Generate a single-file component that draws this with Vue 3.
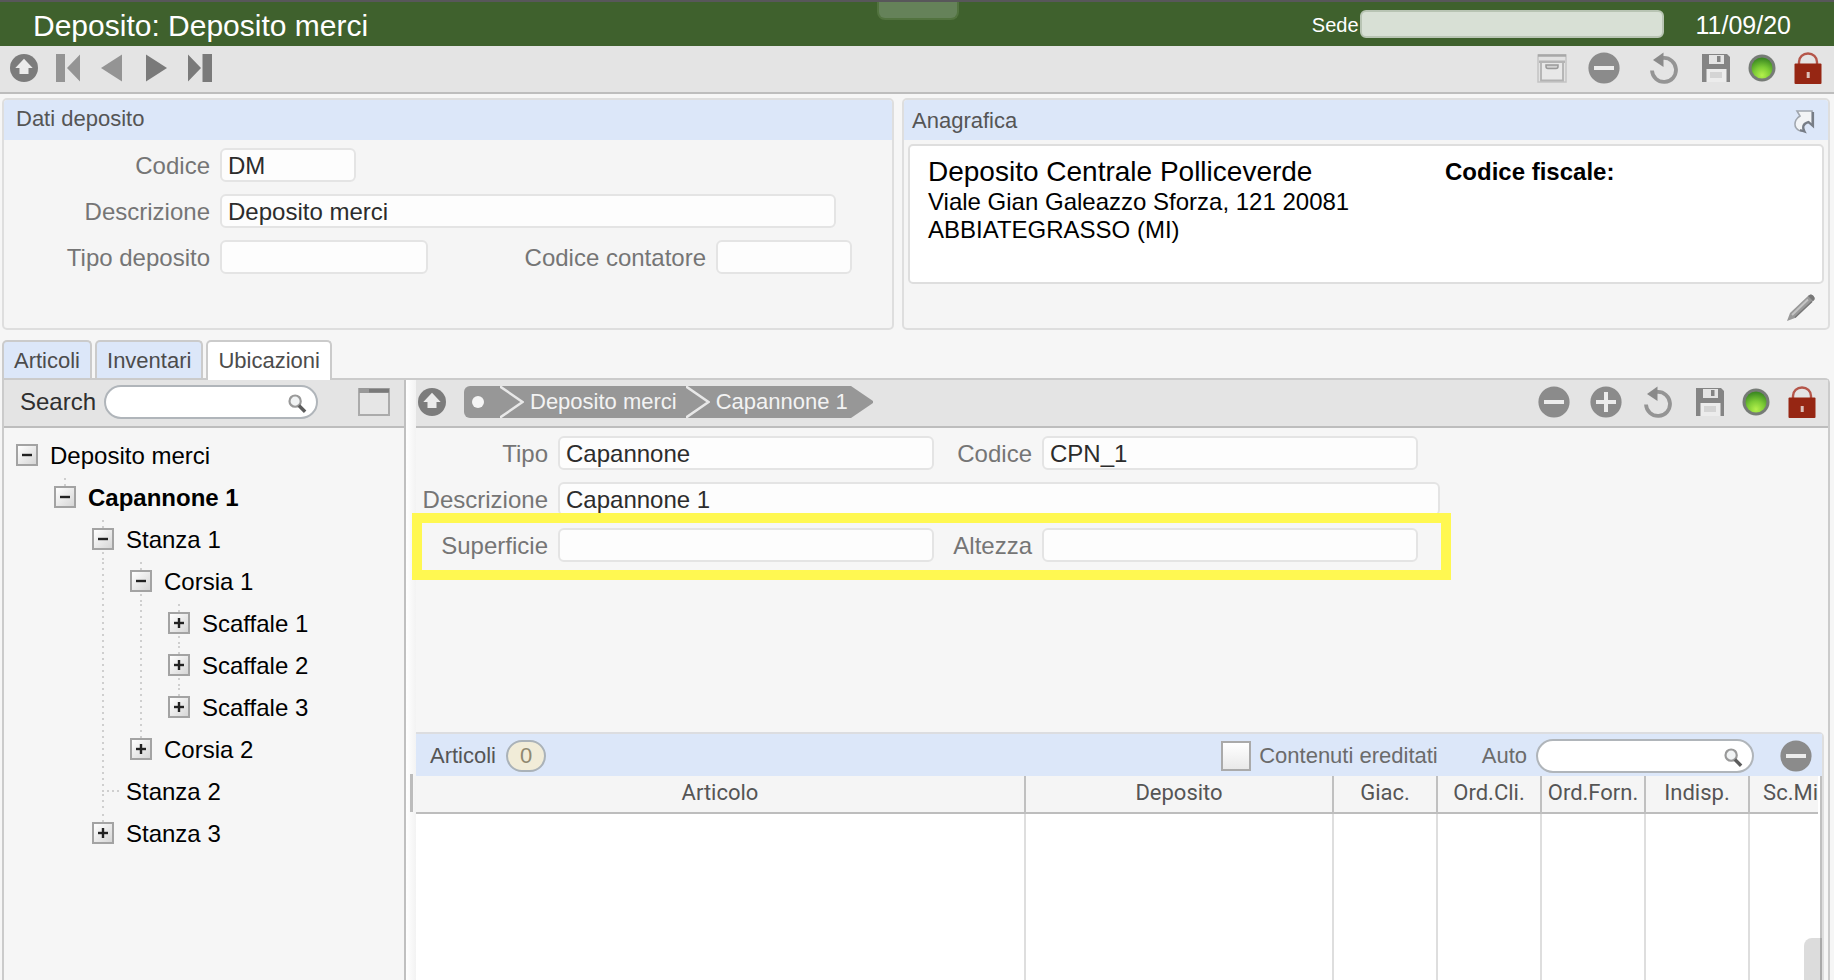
<script setup>
import { ref } from 'vue'

const icons = {
  up: '<circle cx="16" cy="16" r="14" fill="#7c7c7c"/><path d="M16 6.7 24.7 16H20.5V22H11.5V16H7.3Z" fill="#ebebeb"/>',
  first: '<path d="M4 2h9v28H4zM28 2.5v27L15 16z" fill="#949494"/>',
  prev: '<path d="M26 2.5v27L5 16z" fill="#949494"/>',
  next: '<path d="M6 2.5v27L27 16z" fill="#7a7a7a"/>',
  last: '<path d="M4 2.5v27L17 16zM18.5 2H28v28h-9.500z" fill="#7a7a7a"/>',
  archive:
    '<rect x="2" y="3" width="28" height="27" fill="#e2e2e2" stroke="#c4c4c4" stroke-width="1.500"/><path d="M2 3.500H30" stroke="#a8a8a8" stroke-width="2.500"/><path d="M3 8.500H29V11H3Z" fill="#b4b4b4"/><path d="M5 11V28.500H27V11" fill="#e8e8e8" stroke="#b2b2b2" stroke-width="1.800"/><path d="M10 13V14.500Q10 16.500 12 16.500H20Q22 16.500 22 14.500V13Z" fill="#d2d2d2" stroke="#999" stroke-width="1.500"/>',
  minus: '<circle cx="16" cy="16" r="15.600" fill="#8b8b8b"/><path d="M6 14H26V18H6Z" fill="#ececec"/>',
  plus: '<circle cx="16" cy="16" r="15.600" fill="#8b8b8b"/><path d="M6 14h8V6h4v8h8v4h-8v8h-4v-8H6z" fill="#ececec"/>',
  undo: '<path d="M4 18.500A12 12 0 1 0 15 6" fill="none" stroke="#949494" stroke-width="3.800"/><path d="M5 8 15.500 .5V15Z" fill="#8a8a8a"/>',
  save: '<path d="M2 2H27L30 5V30H2Z" fill="#848484"/><path d="M9 3H24V12H9Z" fill="#e4e4e4"/><path d="M17 4H20.500V10H17Z" fill="#848484"/><path d="M6.500 17H26.500V30H6.500Z" fill="#ececec"/><path d="M10 20H22V26H10Z" fill="#d4d4d4"/>',
  led: '<defs><radialGradient id="ledGlow" cx=".5" cy=".85" r=".8"><stop offset="0" stop-color="#b4f04c"/><stop offset=".5" stop-color="#7ccb35"/><stop offset="1" stop-color="#3d8a22"/></radialGradient></defs><circle cx="16" cy="16" r="13.500" fill="#767b76"/><circle cx="16" cy="16" r="10.500" fill="url(#ledGlow)"/>',
  lock: '<path d="M7 12.500V10C7 5 11 1.500 16 1.500S25 5 25 10V12.500" fill="none" stroke="#b5564a" stroke-width="2.400"/><rect x="2.500" y="11.500" width="27" height="20.500" rx="1" fill="#962613"/><rect x="14.700" y="20" width="3" height="6" fill="#dcc0ba"/>',
  link: '<path d="M9 6H24V20L20 17C15 18 14 21 16 26C9 27 5 21 8 15Q9 13 12 11Z" fill="#f2f4f6" stroke="#a0a6ae" stroke-width="1.600"/><path d="M25 7V21L20.500 17C15 19 14 22 16.500 26.500L12 25" fill="none" stroke="#777d86" stroke-width="2.200"/>',
  pencil:
    '<path d="M3 29 6 21 24 4Q27 1 29.500 4T29 9L11 26Z" fill="#999"/><path d="M8 23 24 7.500" stroke="#c4c4c4" stroke-width="2"/><path d="M11 25.500 28 9.500" stroke="#777" stroke-width="1.500"/><path d="M24 4Q27 1 29.500 4T29 9Z" fill="#787878"/>',
  lens: '<circle cx="13" cy="13" r="9" fill="#f1f3f4" stroke="#999" stroke-width="3.500"/><path d="M19 20 29 30" stroke="#5c5c5c" stroke-width="5.500"/>',
  window:
    '<rect x="1" y="3" width="30" height="26" fill="#e6e6e6" stroke="#ababab" stroke-width="2"/><path d="M1 2H31V7H1Z" fill="#999"/><path d="M11 3H31V6.500H11Z" fill="#7a7a7a"/>',
}

const navButtons = [
  { icon: 'up', label: 'Torna su' },
  { icon: 'first', label: 'Primo' },
  { icon: 'prev', label: 'Precedente' },
  { icon: 'next', label: 'Successivo' },
  { icon: 'last', label: 'Ultimo' },
]
const formActions = [
  { icon: 'archive', label: 'Archivia' },
  { icon: 'minus', label: 'Elimina' },
  { icon: 'undo', label: 'Annulla', spaced: true },
  { icon: 'save', label: 'Salva' },
  { icon: 'led', label: 'Stato', tight: true },
  { icon: 'lock', label: 'Blocca', tight: true },
]
const placeActions = [
  { icon: 'minus', label: 'Elimina ubicazione' },
  { icon: 'plus', label: 'Aggiungi ubicazione' },
  { icon: 'undo', label: 'Annulla modifiche' },
  { icon: 'save', label: 'Salva ubicazione' },
  { icon: 'led', label: 'Stato ubicazione', tight: true },
  { icon: 'lock', label: 'Blocca ubicazione', tight: true },
]

const tabs = ['Articoli', 'Inventari', 'Ubicazioni']
const activeTab = ref('Ubicazioni')

// guides: one flag per ancestor level, true where the branch line continues
const tree = [
  { text: 'Deposito merci', sign: '-', guides: [], above: false, below: false },
  { text: 'Capannone 1', sign: '-', guides: [false], above: true, below: false, current: true },
  { text: 'Stanza 1', sign: '-', guides: [false, false], above: true, below: true },
  { text: 'Corsia 1', sign: '-', guides: [false, false, true], above: true, below: true },
  { text: 'Scaffale 1', sign: '+', guides: [false, false, true, true], above: true, below: true },
  { text: 'Scaffale 2', sign: '+', guides: [false, false, true, true], above: true, below: true },
  { text: 'Scaffale 3', sign: '+', guides: [false, false, true, true], above: true, below: false },
  { text: 'Corsia 2', sign: '+', guides: [false, false, true], above: true, below: false },
  { text: 'Stanza 2', sign: '', guides: [false, false], above: true, below: true },
  { text: 'Stanza 3', sign: '+', guides: [false, false], above: true, below: false },
]

const columns = [
  { title: 'Articolo', size: 'col-main' },
  { title: 'Deposito', size: 'col-wide' },
  { title: 'Giac.', size: 'col-num' },
  { title: 'Ord.Cli.', size: 'col-num' },
  { title: 'Ord.Forn.', size: 'col-num' },
  { title: 'Indisp.', size: 'col-num' },
  { title: 'Sc.Mi', size: 'col-last' },
]

const sede = ref('')
const codice = ref('DM')
const descrizione = ref('Deposito merci')
const tipoDeposito = ref('')
const codiceContatore = ref('')
const treeSearch = ref('')
const placeType = ref('Capannone')
const placeCode = ref('CPN_1')
const placeName = ref('Capannone 1')
const superficie = ref('')
const altezza = ref('')
const inherited = ref(false)
const auto = ref('')
</script>

<template>
  <div class="page">
    <header class="titlebar">
      <span class="handle"></span>
      <h1>Deposito: Deposito merci</h1>
      <label class="sede-label" for="sede">Sede</label>
      <input id="sede" v-model="sede" class="sede" type="text" />
      <time class="date" datetime="2020-09-11">11/09/20</time>
    </header>

    <div class="toolbar main-toolbar">
      <div class="nav-buttons">
        <button v-for="b in navButtons" :key="b.icon" class="icon-btn" type="button" :aria-label="b.label">
          <svg viewBox="0 0 32 32" v-html="icons[b.icon]"></svg>
        </button>
      </div>
      <div class="actions">
        <button
          v-for="b in formActions"
          :key="b.icon"
          class="icon-btn"
          :class="{ tight: b.tight, spaced: b.spaced }"
          type="button"
          :aria-label="b.label"
        >
          <svg viewBox="0 0 32 32" v-html="icons[b.icon]"></svg>
        </button>
      </div>
    </div>

    <div class="panels">
      <section class="panel">
        <h2 class="panel-head data-head">Dati deposito</h2>
        <div class="data-form">
          <div class="row">
            <label for="codice">Codice</label>
            <input id="codice" v-model="codice" class="field w-code" type="text" />
          </div>
          <div class="row">
            <label for="descrizione">Descrizione</label>
            <input id="descrizione" v-model="descrizione" class="field w-desc" type="text" />
          </div>
          <div class="row">
            <label for="tipo-deposito">Tipo deposito</label>
            <input id="tipo-deposito" v-model="tipoDeposito" class="field w-type" type="text" />
            <label class="counter" for="contatore">Codice contatore</label>
            <input id="contatore" v-model="codiceContatore" class="field w-code" type="text" />
          </div>
        </div>
      </section>

      <section class="panel">
        <div class="panel-head registry-head">
          <h2>Anagrafica</h2>
          <button class="icon-btn" type="button" aria-label="Apri anagrafica">
            <svg viewBox="0 0 32 32" v-html="icons.link"></svg>
          </button>
        </div>
        <div class="card">
          <div>
            <p class="card-name">Deposito Centrale Polliceverde</p>
            <p class="card-line">Viale Gian Galeazzo Sforza, 121 20081</p>
            <p class="card-line">ABBIATEGRASSO (MI)</p>
          </div>
          <p class="card-tax">Codice fiscale:</p>
        </div>
        <div class="card-foot">
          <button class="icon-btn" type="button" aria-label="Modifica">
            <svg viewBox="0 0 32 32" v-html="icons.pencil"></svg>
          </button>
        </div>
      </section>
    </div>

    <div class="tabs" role="tablist">
      <button
        v-for="t in tabs"
        :key="t"
        class="tab"
        :class="{ active: t === activeTab }"
        role="tab"
        type="button"
        :aria-selected="t === activeTab"
        @click="activeTab = t"
      >{{ t }}</button>
    </div>

    <main class="pane">
      <aside class="tree-pane">
        <div class="toolbar tree-toolbar">
          <label for="tree-search">Search</label>
          <div class="search tree-search">
            <input id="tree-search" v-model="treeSearch" type="text" />
            <svg viewBox="0 0 32 32" v-html="icons.lens"></svg>
          </div>
          <button class="icon-btn" type="button" aria-label="Finestra">
            <svg viewBox="0 0 32 32" v-html="icons.window"></svg>
          </button>
        </div>
        <ul class="tree">
          <li v-for="n in tree" :key="n.text">
            <span v-for="(g, i) in n.guides" :key="i" class="guide" :class="{ line: g }"></span>
            <span class="node" :class="{ leaf: !n.sign }">
              <span class="stub" :class="{ line: n.above }"></span>
              <button v-if="n.sign" type="button" class="toggle" :aria-label="n.sign === '+' ? 'Espandi' : 'Comprimi'">
                <svg viewBox="0 0 22 22">
                  <path d="M6 11H16" />
                  <path v-if="n.sign === '+'" d="M11 6V16" />
                </svg>
              </button>
              <span v-else class="elbow"></span>
              <span class="stub" :class="{ line: n.below }"></span>
            </span>
            <a href="#" :class="{ current: n.current }">{{ n.text }}</a>
          </li>
        </ul>
      </aside>

      <div class="splitter"><span></span></div>

      <div class="detail">
        <div class="toolbar detail-toolbar">
          <button class="icon-btn" type="button" aria-label="Livello superiore">
            <svg viewBox="0 0 32 32" v-html="icons.up"></svg>
          </button>
          <nav class="crumbs" aria-label="Percorso">
            <a href="#" class="crumb-root" aria-label="Inizio"><span></span></a>
            <svg class="chevron" viewBox="0 0 24 32"><path class="fill" d="M0 0H24V32H0Z" /><path class="edge" d="M-2 -1 22.500 16 -2 33" /></svg>
            <a href="#">Deposito merci</a>
            <svg class="chevron" viewBox="0 0 24 32"><path class="fill" d="M0 0H24V32H0Z" /><path class="edge" d="M-2 -1 22.500 16 -2 33" /></svg>
            <a href="#" class="crumb-last">Capannone 1</a>
            <svg class="chevron" viewBox="0 0 24 32"><path class="fill" d="M0 0 22 15V17L0 32Z" /></svg>
          </nav>
          <div class="actions">
            <button
              v-for="b in placeActions"
              :key="b.icon"
              class="icon-btn"
              :class="{ tight: b.tight }"
              type="button"
              :aria-label="b.label"
            >
              <svg viewBox="0 0 32 32" v-html="icons[b.icon]"></svg>
            </button>
          </div>
        </div>

        <div class="place-form">
          <div class="row">
            <label for="tipo">Tipo</label>
            <input id="tipo" v-model="placeType" class="field w-half" type="text" />
            <label class="second" for="place-code">Codice</label>
            <input id="place-code" v-model="placeCode" class="field w-half" type="text" />
          </div>
          <div class="row">
            <label for="place-name">Descrizione</label>
            <input id="place-name" v-model="placeName" class="field w-full" type="text" />
          </div>
          <div class="row marked">
            <label for="superficie">Superficie</label>
            <input id="superficie" v-model="superficie" class="field w-half" type="text" />
            <label class="second" for="altezza">Altezza</label>
            <input id="altezza" v-model="altezza" class="field w-half" type="text" />
          </div>
        </div>

        <section class="articles">
          <div class="articles-head">
            <h2>Articoli</h2>
            <span class="badge">0</span>
            <input id="inherited" v-model="inherited" class="check" type="checkbox" />
            <label for="inherited">Contenuti ereditati</label>
            <label class="auto-label" for="auto">Auto</label>
            <div class="search auto-search">
              <input id="auto" v-model="auto" type="text" />
              <svg viewBox="0 0 32 32" v-html="icons.lens"></svg>
            </div>
            <button class="icon-btn" type="button" aria-label="Rimuovi articolo">
              <svg viewBox="0 0 32 32" v-html="icons.minus"></svg>
            </button>
          </div>
          <div class="grid-frame">
            <table>
              <colgroup>
                <col v-for="c in columns" :key="c.title" :class="c.size" />
              </colgroup>
              <thead>
                <tr>
                  <th v-for="c in columns" :key="c.title" scope="col">{{ c.title }}</th>
                </tr>
              </thead>
              <tbody>
                <tr>
                  <td v-for="c in columns" :key="c.title"></td>
                </tr>
              </tbody>
            </table>
          </div>
          <span class="corner"></span>
        </section>
      </div>
    </main>
  </div>
</template>

<style>
body {
  background: #f5f5f5;
}
</style>

<style scoped>
.page,
.page * {
  box-sizing: border-box;
}
.page {
  display: flex;
  flex-direction: column;
  height: 100vh;
  overflow: hidden;
  background: #f6f6f6;
  color: #555;
  font-family: "Liberation Sans", Arial, sans-serif;
  font-size: 22px;
}
h1,
h2,
p,
ul {
  margin: 0;
  padding: 0;
  font-weight: 400;
}
h2 {
  font-size: 22px;
}
a {
  text-decoration: none;
}
input,
button {
  font-family: inherit;
}
.titlebar {
  position: relative;
  display: flex;
  align-items: center;
  flex: none;
  height: 46px;
  padding: 0 43px 0 33px;
  border-top: 2px solid #58575a;
  background: #3f612d;
  color: #fff;
}
.handle {
  position: absolute;
  top: 0;
  left: 50%;
  width: 82px;
  height: 18px;
  margin-left: -40px;
  border: 2px solid #52733f;
  border-top: 0;
  border-radius: 0 0 8px 8px;
  background: #658259;
}
h1 {
  margin-right: auto;
  padding-top: 3px;
  font-size: 30px;
}
.sede-label {
  padding-top: 2px;
  font-size: 20px;
}
.sede {
  width: 304px;
  height: 28px;
  margin-left: 1px;
  padding: 0 6px;
  border: 2px solid #b8c4b3;
  border-radius: 6px;
  background: #d8e0d5;
  font-size: 20px;
}
.date {
  margin-left: 32px;
  padding-top: 2px;
  font-size: 25px;
}
.toolbar {
  display: flex;
  align-items: center;
  flex: none;
  height: 48px;
  padding-bottom: 2px;
  border-bottom: 2px solid #bdbdbd;
  background: #e4e4e4;
}
.main-toolbar {
  justify-content: space-between;
  padding-right: 10px;
  padding-left: 8px;
}
.nav-buttons {
  display: flex;
  gap: 12px;
}
.actions {
  display: flex;
  margin-left: auto;
}
.actions .icon-btn {
  margin-left: 20px;
}
.actions .tight {
  margin-left: 14px;
}
.actions .spaced {
  margin-left: 28px;
}
.icon-btn {
  flex: none;
  width: 32px;
  height: 32px;
  padding: 0;
  border: 0;
  background: none;
}
.icon-btn svg {
  display: block;
  width: 100%;
  height: 100%;
}
.panels {
  display: grid;
  grid-template-columns: 892fr 928fr;
  gap: 8px;
  flex: none;
  padding: 4px 4px 0 2px;
}
.panel {
  min-height: 232px;
  border: 2px solid #dedede;
  border-radius: 5px;
  background: #f5f5f5;
  overflow: hidden;
}
.panel-head {
  display: flex;
  align-items: center;
  height: 40px;
  background: #dce7f9;
}
.data-head {
  padding: 0 12px 2px;
}
.registry-head {
  justify-content: space-between;
  padding: 2px 8px 0;
}
.data-form {
  display: flex;
  flex-direction: column;
  gap: 12px;
  padding-top: 8px;
}
.row {
  display: flex;
  align-items: center;
  gap: 10px;
}
.row label {
  height: 34px;
  color: #757575;
  font-size: 24px;
  line-height: 36px;
  text-align: right;
  white-space: nowrap;
}
.data-form .row label {
  width: 206px;
}
.data-form .row .counter {
  width: 268px;
}
.field {
  height: 34px;
  padding: 2px 6px 0;
  border: 2px solid #e4e4e4;
  border-radius: 6px;
  background: #fdfdfd;
  color: #2c2c2c;
  font-size: 24px;
}
.w-code {
  width: 136px;
}
.w-desc {
  width: 616px;
}
.w-type {
  width: 208px;
}
.w-half {
  width: 376px;
}
.w-full {
  width: 882px;
}
.card {
  display: grid;
  grid-template-columns: 517fr 363fr;
  height: 140px;
  margin: 4px 4px 0;
  padding: 10px 14px 10px 18px;
  border: 2px solid #dedede;
  border-radius: 5px;
  background: #fff;
  color: #000;
  font-size: 24px;
  line-height: 28px;
}
.card-name {
  font-size: 28px;
  line-height: 32px;
}
.card-tax {
  font-weight: 700;
  line-height: 32px;
}
.card-foot {
  display: flex;
  justify-content: flex-end;
  padding: 8px 12px 0;
}
.tabs {
  position: relative;
  z-index: 1;
  display: flex;
  flex: none;
  gap: 3px;
  height: 40px;
  margin: 10px 0 -2px 2px;
}
.tab {
  height: 38px;
  padding: 2px 10px 0;
  border: 2px solid #cbcbcb;
  border-bottom: 0;
  border-radius: 5px 5px 0 0;
  background: #dce7f9;
  color: #4c4c4c;
  font-size: 22px;
}
.tab.active {
  height: 40px;
  padding-bottom: 2px;
  background: #fff;
}
.pane {
  display: flex;
  flex: 1;
  min-height: 0;
  margin: 0 4px 0 2px;
  border: 2px solid #cbcbcb;
  border-bottom: 0;
  border-radius: 0 5px 0 0;
}
.tree-pane {
  flex: none;
  width: 402px;
  border-right: 2px solid #c0c0c0;
}
.tree-toolbar {
  padding-right: 14px;
  padding-left: 16px;
  color: #2f2f2f;
  font-size: 24px;
}
.search {
  display: flex;
  align-items: center;
  height: 34px;
  padding: 2px 9px 0 14px;
  border: 2px solid #b0b5ba;
  border-radius: 17px;
  background: #fff;
}
.search input {
  flex: 1;
  min-width: 0;
  padding: 0;
  border: 0;
  background: none;
  font-size: 22px;
}
.search svg {
  flex: none;
  width: 20px;
  height: 20px;
}
.tree-search {
  width: 214px;
  margin: 0 auto 0 8px;
}
.tree {
  padding: 6px 0 0 12px;
  list-style: none;
}
.tree li {
  display: flex;
  align-items: center;
  height: 42px;
  font-size: 24px;
}
.guide {
  width: 38px;
  height: 42px;
}
.line {
  background: repeating-linear-gradient(#cfcfcf 0 2px, transparent 2px 6px) 10px 2px / 2px 100% no-repeat;
}
.node {
  display: grid;
  grid-template-rows: 1fr 22px 1fr;
  width: 22px;
  height: 42px;
  margin-right: 12px;
}
.node.leaf {
  grid-template-rows: 1fr 2px 1fr;
}
.elbow {
  width: 19px;
  margin-left: 10px;
  background: repeating-linear-gradient(90deg, #cfcfcf 0 2px, transparent 2px 5px);
}
.toggle {
  width: 22px;
  height: 22px;
  padding: 0;
  border: 2px solid #a3a3a3;
  background: linear-gradient(135deg, #fff, #d6d6d6);
}
.toggle svg {
  display: block;
  width: 22px;
  height: 22px;
  margin: -2px;
  stroke: #222;
  stroke-width: 2.400;
}
.tree a {
  padding-top: 2px;
  color: #000;
  white-space: nowrap;
}
.tree .current {
  font-weight: 700;
}
.splitter {
  display: flex;
  justify-content: center;
  flex: none;
  width: 10px;
  padding-top: 394px;
  background: linear-gradient(90deg, #fff, #f3f3f3);
}
.splitter span {
  width: 3px;
  height: 38px;
  background: #bcbcbc;
}
.detail {
  display: flex;
  flex: 1;
  flex-direction: column;
  min-width: 0;
}
.detail-toolbar {
  padding-right: 10px;
}
.crumbs {
  display: flex;
  height: 32px;
  margin-left: 16px;
  border-radius: 6px 0 0 6px;
  overflow: hidden;
}
.crumbs a {
  padding: 0 9px 0 6px;
  background: #979797;
  color: #f3f3f3;
  line-height: 32px;
  white-space: nowrap;
}
.crumbs .crumb-last {
  padding-right: 3px;
}
.crumbs .crumb-root {
  display: flex;
  align-items: center;
  width: 36px;
  padding: 0 8px;
}
.crumb-root span {
  width: 12px;
  height: 12px;
  border-radius: 50%;
  background: #f5f5f5;
}
.chevron {
  width: 24px;
  height: 32px;
}
.chevron .fill {
  fill: #979797;
}
.chevron .edge {
  fill: none;
  stroke: #e8e8e8;
  stroke-width: 2.500;
}
.place-form {
  display: flex;
  flex: none;
  flex-direction: column;
  gap: 12px;
  min-height: 304px;
  padding-top: 8px;
}
.place-form label {
  width: 132px;
}
.place-form .second {
  width: 88px;
}
.marked {
  position: relative;
  width: 1002px;
}
.marked::after {
  position: absolute;
  inset: -15px -33px -18px -4px;
  border: 10px solid #fff851;
  content: "";
  pointer-events: none;
}
.articles {
  position: relative;
  display: flex;
  flex: 1;
  flex-direction: column;
  min-height: 0;
  margin-right: 4px;
  border-top: 2px solid #dcdde0;
  border-right: 2px solid #dedede;
  border-radius: 0 5px 0 0;
}
.articles-head {
  display: flex;
  align-items: center;
  flex: none;
  height: 42px;
  padding: 2px 10px 0 14px;
  background: #dce7f9;
}
.badge {
  width: 40px;
  height: 32px;
  margin: 0 auto 0 10px;
  border: 2px solid #aab2b8;
  border-radius: 16px;
  background: #f1ecd8;
  color: #8f8870;
  line-height: 28px;
  text-align: center;
}
.articles-head label {
  color: #6b6b6b;
}
.check {
  width: 30px;
  height: 30px;
  margin: 0 8px 0 0;
  border: 2px solid #aaa;
  appearance: none;
  background: linear-gradient(#fff, #e9e9e9);
}
.check:checked {
  background: #8b8b8b;
}
.articles-head .auto-label {
  margin-left: 44px;
}
.auto-search {
  width: 218px;
  margin: 0 26px 0 9px;
}
.grid-frame {
  display: grid;
  flex: 1;
  min-height: 0;
  padding-right: 2px;
  border-right: 2px solid #c0c0c0;
  background: #fff;
}
table {
  width: 100%;
  border-spacing: 0;
  table-layout: fixed;
}
.col-wide {
  width: 308px;
}
.col-num {
  width: 104px;
}
.col-last {
  width: 68px;
}
th {
  height: 38px;
  padding: 0 0 4px;
  border-right: 2px solid #c0c0c0;
  border-bottom: 2px solid #bdbdbd;
  background: #f5f5f5;
  font-family: Roboto, "Liberation Sans", sans-serif;
  font-size: 22px;
  font-weight: 400;
}
td {
  padding: 0;
  border-right: 2px solid #dedede;
}
th:last-child,
td:last-child {
  border-right: 0;
  text-align: right;
}
.corner {
  position: absolute;
  right: 0;
  bottom: 0;
  width: 18px;
  height: 42px;
  border-right: 2px solid #a9a9a9;
  border-radius: 8px 0 0 0;
  background: #dcdcdc;
}
</style>
